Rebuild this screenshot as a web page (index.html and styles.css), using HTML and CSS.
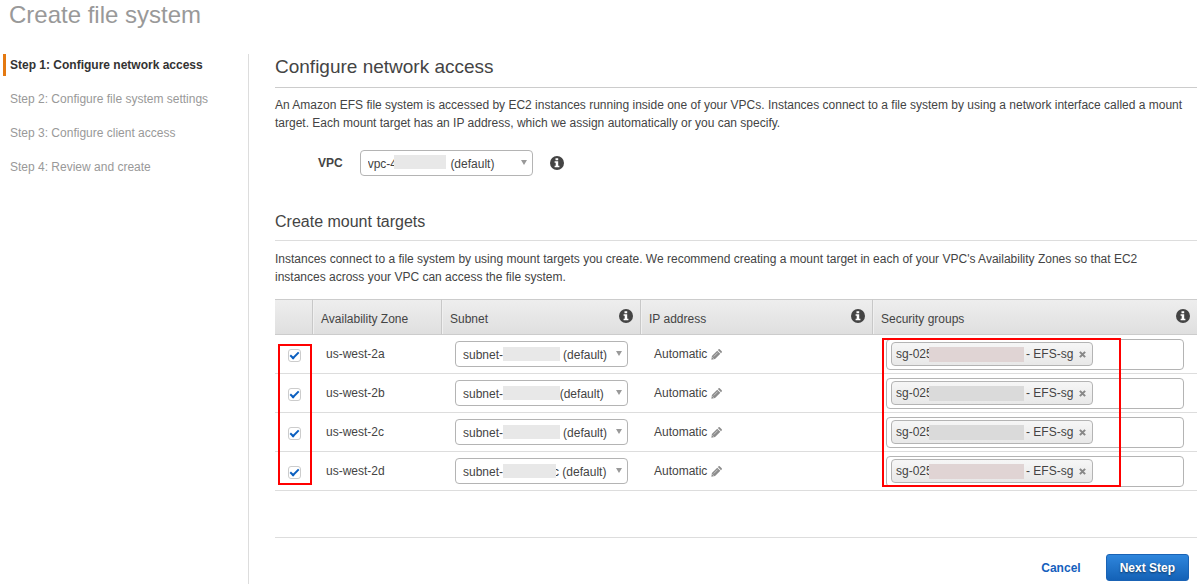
FILE: index.html
```html
<!DOCTYPE html>
<html lang="en">
<head>
  <meta charset="UTF-8">
  <meta name="viewport" content="width=device-width, initial-scale=1.0">
  <title>Create file system</title>
  <link rel="stylesheet" href="styles.css">
</head>
<body>
  <svg class="sprite" aria-hidden="true">
    <symbol id="icon-info" viewBox="0 0 14 14">
      <circle cx="7" cy="7" r="7" fill="#444"/>
      <path fill="#fff" d="M5.500 2.200h2.700v2.100H5.500zM4.600 5.200h3.600v4.600h1.200v1.500H4.600V9.800h1.100V6.700H4.600z"/>
    </symbol>
    <symbol id="icon-pencil" viewBox="0 0 12 12">
      <path fill="#8c8c8c" d="M1 7.600 6.800 1.800l3.400 3.400-5.800 5.800L.4 11.600zM7.500 1.100l.8-.8q.6-.5 1.200 0L11.700 2.500q.5.6 0 1.200l-.8.8z"/>
      <path stroke="#ddd" stroke-width=".8" d="M3 8.200 7.300 3.900M1.400 9l1.600 1.600"/>
    </symbol>
    <symbol id="icon-close" viewBox="0 0 8 8">
      <path stroke="#888" stroke-width="2.400" d="M1 1l6 6M7 1 1 7"/>
    </symbol>
  </svg>

  <h1>Create file system</h1>

  <div class="wizard">
    <nav class="steps">
      <ol>
        <li class="active">Step 1: Configure network access</li>
        <li>Step 2: Configure file system settings</li>
        <li>Step 3: Configure client access</li>
        <li>Step 4: Review and create</li>
      </ol>
    </nav>

    <main>
      <h2>Configure network access</h2>
      <p>An Amazon EFS file system is accessed by EC2 instances running inside one of your VPCs. Instances connect to a file system by using a network interface called a mount target. Each mount target has an IP address, which we assign automatically or you can specify.</p>

      <div class="vpc-row">
        <label for="vpc">VPC</label>
        <div class="select">
          <select id="vpc">
            <option>vpc-4&nbsp;&nbsp;&nbsp;&nbsp;&nbsp;&nbsp;&nbsp;&nbsp;&nbsp;&nbsp;&nbsp;&nbsp;&nbsp;&nbsp;&nbsp;&nbsp;(default)</option>
          </select>
          <span class="mask mask-vpc"></span>
        </div>
        <svg class="info"><use href="#icon-info"/></svg>
      </div>

      <h3>Create mount targets</h3>
      <p>Instances connect to a file system by using mount targets you create. We recommend creating a mount target in each of your VPC's Availability Zones so that EC2 instances across your VPC can access the file system.</p>

      <div class="targets">
        <table>
          <colgroup>
            <col class="col-check">
            <col class="col-zone">
            <col class="col-subnet">
            <col class="col-ip">
            <col>
          </colgroup>
          <thead>
            <tr>
              <th></th>
              <th><div class="head"><span>Availability Zone</span></div></th>
              <th><div class="head"><span>Subnet</span><svg class="info"><use href="#icon-info"/></svg></div></th>
              <th><div class="head"><span>IP address</span><svg class="info"><use href="#icon-info"/></svg></div></th>
              <th><div class="head"><span>Security groups</span><svg class="info"><use href="#icon-info"/></svg></div></th>
            </tr>
          </thead>
          <tbody>
            <tr>
              <td><input type="checkbox" id="zone-a" checked></td>
              <td><label for="zone-a">us-west-2a</label></td>
              <td>
                <div class="select">
                  <select aria-label="Subnet for us-west-2a">
                    <option>subnet-&nbsp;&nbsp;&nbsp;&nbsp;&nbsp;&nbsp;&nbsp;&nbsp;&nbsp;&nbsp;&nbsp;&nbsp;&nbsp;&nbsp;&nbsp;&nbsp;&nbsp;&nbsp;(default)</option>
                  </select>
                  <span class="mask mask-subnet"></span>
                </div>
              </td>
              <td><div class="ip">Automatic <svg class="pencil"><use href="#icon-pencil"/></svg></div></td>
              <td>
                <div class="groups">
                  <span class="tag"><span class="tag-id">sg-025</span><span class="mask mask-group pink"></span>- EFS-sg <button type="button" aria-label="Remove"><svg><use href="#icon-close"/></svg></button></span>
                  <input type="text" aria-label="Security groups for us-west-2a">
                </div>
              </td>
            </tr>
            <tr>
              <td><input type="checkbox" id="zone-b" checked></td>
              <td><label for="zone-b">us-west-2b</label></td>
              <td>
                <div class="select">
                  <select aria-label="Subnet for us-west-2b">
                    <option>subnet-&nbsp;&nbsp;&nbsp;&nbsp;&nbsp;&nbsp;&nbsp;&nbsp;&nbsp;&nbsp;&nbsp;&nbsp;&nbsp;&nbsp;&nbsp;&nbsp;&nbsp;(default)</option>
                  </select>
                  <span class="mask mask-subnet"></span>
                </div>
              </td>
              <td><div class="ip">Automatic <svg class="pencil"><use href="#icon-pencil"/></svg></div></td>
              <td>
                <div class="groups">
                  <span class="tag"><span class="tag-id">sg-025</span><span class="mask mask-group"></span>- EFS-sg <button type="button" aria-label="Remove"><svg><use href="#icon-close"/></svg></button></span>
                  <input type="text" aria-label="Security groups for us-west-2b">
                </div>
              </td>
            </tr>
            <tr>
              <td><input type="checkbox" id="zone-c" checked></td>
              <td><label for="zone-c">us-west-2c</label></td>
              <td>
                <div class="select">
                  <select aria-label="Subnet for us-west-2c">
                    <option>subnet-&nbsp;&nbsp;&nbsp;&nbsp;&nbsp;&nbsp;&nbsp;&nbsp;&nbsp;&nbsp;&nbsp;&nbsp;&nbsp;&nbsp;&nbsp;&nbsp;&nbsp;&nbsp;(default)</option>
                  </select>
                  <span class="mask mask-subnet"></span>
                </div>
              </td>
              <td><div class="ip">Automatic <svg class="pencil"><use href="#icon-pencil"/></svg></div></td>
              <td>
                <div class="groups">
                  <span class="tag"><span class="tag-id">sg-025</span><span class="mask mask-group"></span>- EFS-sg <button type="button" aria-label="Remove"><svg><use href="#icon-close"/></svg></button></span>
                  <input type="text" aria-label="Security groups for us-west-2c">
                </div>
              </td>
            </tr>
            <tr>
              <td><input type="checkbox" id="zone-d" checked></td>
              <td><label for="zone-d">us-west-2d</label></td>
              <td>
                <div class="select">
                  <select aria-label="Subnet for us-west-2d">
                    <option>subnet-&nbsp;&nbsp;&nbsp;&nbsp;&nbsp;&nbsp;&nbsp;&nbsp;&nbsp;&nbsp;&nbsp;&nbsp;&nbsp;&nbsp;&nbsp;c&nbsp;(default)</option>
                  </select>
                  <span class="mask mask-subnet short"></span>
                </div>
              </td>
              <td><div class="ip">Automatic <svg class="pencil"><use href="#icon-pencil"/></svg></div></td>
              <td>
                <div class="groups">
                  <span class="tag"><span class="tag-id">sg-025</span><span class="mask mask-group pink"></span>- EFS-sg <button type="button" aria-label="Remove"><svg><use href="#icon-close"/></svg></button></span>
                  <input type="text" aria-label="Security groups for us-west-2d">
                </div>
              </td>
            </tr>
          </tbody>
        </table>
        <div class="highlight highlight-zones"></div>
        <div class="highlight highlight-groups"></div>
      </div>

      <footer>
        <a href="#">Cancel</a>
        <button type="button" class="btn-primary">Next Step</button>
      </footer>
    </main>
  </div>
</body>
</html>
```
FILE: styles.css
```css
:root {
  --text-color: #444;
  --muted-color: #999;
  --border-color: #ddd;
  --control-border: #b4b4b4;
  --link-color: #1560bd;
}

* {
  margin: 0;
  padding: 0;
  box-sizing: border-box;
}

body {
  font-family: "Helvetica Neue", "Liberation Sans", Arial, sans-serif;
  font-size: 12px;
  line-height: 18px;
  color: var(--text-color);
  background: #fff;
}

.sprite {
  position: absolute;
  width: 0;
  height: 0;
}

h1,
h2,
h3 {
  font-weight: normal;
}

h1 {
  padding-left: 9px;
  margin-bottom: 24px;
  font-size: 24px;
  line-height: 30px;
  color: var(--muted-color);
}

h2 {
  padding-bottom: 7px;
  margin-bottom: 8px;
  border-bottom: 1px solid #ccc;
  font-size: 19px;
  line-height: 26px;
}

h3 {
  padding-bottom: 8px;
  margin: 35px 0 9px;
  border-bottom: 1px solid var(--border-color);
  font-size: 16px;
  line-height: 21px;
}

p {
  padding-right: 8px;
}

.wizard {
  display: flex;
  padding: 0 3px;
}

/* Step list */
.steps {
  flex: 0 0 246px;
  border-right: 1px solid var(--border-color);
}

.steps ol {
  list-style: none;
}

.steps li {
  padding-left: 4px;
  margin-bottom: 12px;
  border-left: 3px solid transparent;
  line-height: 22px;
  color: var(--muted-color);
}

.steps .active {
  border-left-color: #e47911;
  font-weight: bold;
  color: #333;
}

main {
  flex: 1;
  padding: 0 0 3px 26px;
}

/* Controls */
.info {
  flex: none;
  width: 14px;
  height: 14px;
}

.vpc-row {
  display: flex;
  align-items: center;
  margin: 18px 0 0 43px;
}

.vpc-row label {
  font-weight: bold;
}

.vpc-row .select {
  margin: 0 17px;
}

.select {
  position: relative;
  width: 173px;
}

.select::after {
  content: "";
  position: absolute;
  top: 10px;
  right: 6px;
  border: 3px solid transparent;
  border-top: 5px solid #999;
}

select {
  display: block;
  appearance: none;
  width: 100%;
  height: 26px;
  padding: 2px 7px 0;
  border: 1px solid var(--control-border);
  border-radius: 4px;
  background: #fff;
  font: inherit;
  color: inherit;
}

.mask {
  position: absolute;
  background: #e8e8e8;
}

.mask-vpc {
  top: 5px;
  left: 34px;
  width: 52px;
  height: 14px;
}

.mask-subnet {
  top: 6px;
  left: 48px;
  width: 57px;
  height: 14px;
}

.mask-subnet.short {
  width: 53px;
}

input[type="checkbox"] {
  display: block;
  position: relative;
  appearance: none;
  width: 13px;
  height: 13px;
  border: 1px solid #ccc;
  border-radius: 3px;
  background: #fff;
}

input[type="checkbox"]:checked::after {
  content: "";
  position: absolute;
  top: 2px;
  left: 1px;
  box-sizing: border-box;
  width: 9px;
  height: 5px;
  border: solid #0a5fc0;
  border-width: 0 0 2px 2px;
  transform: rotate(-45deg);
}

/* Mount target table */
.targets {
  position: relative;
  margin-top: 13px;
}

table {
  width: 100%;
  table-layout: fixed;
  border-collapse: separate;
  border-spacing: 0;
}

.col-check {
  width: 37px;
}

.col-zone {
  width: 129px;
}

.col-subnet {
  width: 199px;
}

.col-ip {
  width: 232px;
}

th {
  height: 36px;
  border-top: 1px solid #ccc;
  border-bottom: 1px solid #ccc;
  background: linear-gradient(#eee, #dfdfdf);
  font-weight: normal;
  text-align: left;
  vertical-align: top;
}

th + th {
  border-left: 1px solid #c8c8c8;
  box-shadow: inset 1px 0 #f0f0f0;
}

.head {
  display: flex;
  justify-content: space-between;
  padding: 9px 7px 0 8px;
  line-height: 20px;
}

td {
  height: 39px;
  padding: 0 13px 0 14px;
  border-bottom: 1px solid var(--border-color);
}

td:first-child {
  padding: 2px 0 0 13px;
}

.ip {
  display: flex;
  align-items: center;
  gap: 4px;
}

.pencil {
  width: 11px;
  height: 11px;
}

.groups {
  display: flex;
  align-items: center;
  height: 31px;
  padding: 0 4px;
  border: 1px solid var(--control-border);
  border-radius: 4px;
}

.groups input {
  flex: 1;
  min-width: 0;
  height: 24px;
  border: 0;
  outline: 0;
  background: none;
  font: inherit;
}

.tag {
  position: relative;
  display: flex;
  align-items: center;
  height: 24px;
  padding: 0 4px;
  border: 1px solid var(--control-border);
  border-radius: 4px;
  background: linear-gradient(#f6f6f6, #e8e8e8);
  white-space: nowrap;
}

.tag-id {
  width: 130px;
}

.mask-group {
  top: 4px;
  left: 37px;
  width: 95px;
  height: 15px;
  background: #dadada;
}

.mask-group.pink {
  background: #e0d4d4;
}

.tag button {
  display: flex;
  padding: 2px;
  margin-left: 4px;
  border: 0;
  background: none;
}

.tag svg {
  width: 7px;
  height: 7px;
}

/* Red callouts over the table */
.highlight {
  position: absolute;
  border: 2px solid #f00;
  pointer-events: none;
}

.highlight-zones {
  top: 45px;
  left: 3px;
  width: 34px;
  height: 141px;
}

.highlight-groups {
  top: 39px;
  left: 607px;
  width: 239px;
  height: 149px;
}

footer {
  display: flex;
  align-items: center;
  justify-content: flex-end;
  gap: 25px;
  padding: 16px 8px 0 0;
  margin-top: 46px;
  border-top: 1px solid var(--border-color);
  font-weight: bold;
}

footer a {
  color: var(--link-color);
  text-decoration: none;
}

.btn-primary {
  height: 27px;
  padding: 0 13px;
  border: 1px solid #1a63b5;
  border-radius: 3px;
  background: linear-gradient(#2f86dc, #1462b7);
  font: inherit;
  color: #fff;
  text-shadow: 0 1px 2px rgba(0, 0, 0, 0.5);
}
```
